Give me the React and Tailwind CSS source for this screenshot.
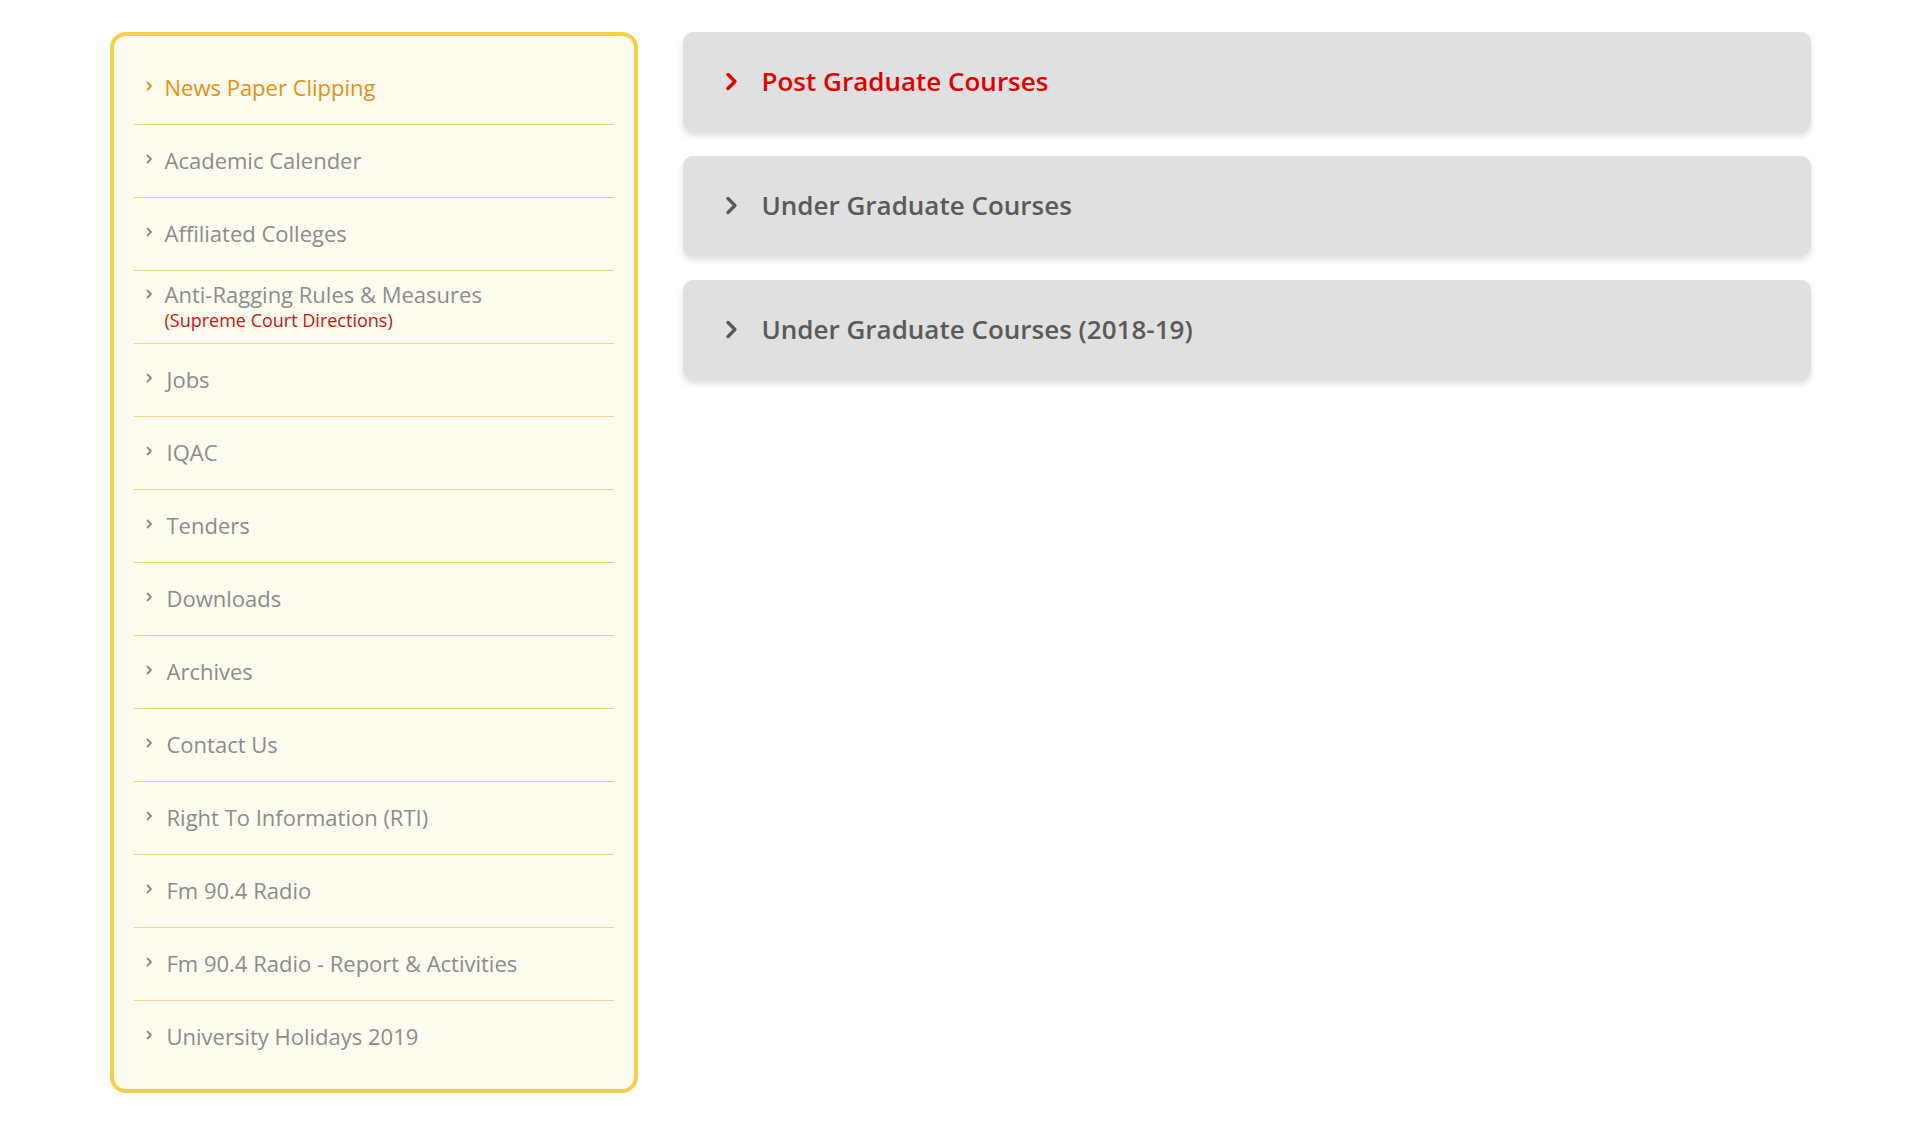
import React from "react";

const items = [
  { label: "News Paper Clipping", active: true },
  { label: "Academic Calender" },
  { label: "Affiliated Colleges" },
  { label: "Anti-Ragging Rules & Measures", sub: "(Supreme Court Directions)" },
  { label: "Jobs", shift: true },
  { label: "IQAC", shift: true },
  { label: "Tenders", shift: true },
  { label: "Downloads", shift: true },
  { label: "Archives", shift: true },
  { label: "Contact Us", shift: true },
  { label: "Right To Information (RTI)", shift: true },
  { label: "Fm 90.4 Radio", shift: true },
  { label: "Fm 90.4 Radio - Report & Activities", shift: true },
  { label: "University Holidays 2019", shift: true },
];

const panels = [
  { label: "Post Graduate Courses", active: true },
  { label: "Under Graduate Courses" },
  { label: "Under Graduate Courses (2018-19)" },
];

function SmallChevron({ color }) {
  return (
    <svg width="7" height="10" viewBox="0 0 7 10" className="shrink-0">
      <polyline points="1.5,1.5 5,5 1.5,8.5" fill="none" stroke={color} strokeWidth="1.8" strokeLinecap="round" strokeLinejoin="round" />
    </svg>
  );
}

function BigChevron({ color }) {
  return (
    <svg width="13" height="19" viewBox="0 0 13 19" className="shrink-0">
      <polyline points="3,2.5 10,9.5 3,16.5" fill="none" stroke={color} strokeWidth="3.4" strokeLinecap="round" strokeLinejoin="round" />
    </svg>
  );
}

export default function App() {
  return (
    <div className="min-h-[1140px] bg-white" style={{ fontFamily: '"Open Sans", "Noto Sans", sans-serif' }}>
      <div className="w-[1701px] mx-auto pt-[32px] flex items-start gap-[45px]">
        <aside className="w-[528px] shrink-0 border-4 border-[#f5cf48] rounded-[16px] bg-[#fffdef] px-5 py-4">
          {items.map((it, i) => (
            <div
              key={i}
              className={`h-[72px] box-content flex items-center ${i < items.length - 1 ? "border-b border-[#efd77c]" : ""}`}
            >
              <div className="flex items-start pl-[12px] -mt-[2px]">
                <div className={`${it.sub ? "mt-[9px]" : "mt-[8px]"}`}>
                  <SmallChevron color={it.active ? "#e8900f" : "#8a8a8a"} />
                </div>
                <div className={`${it.shift ? "ml-[14px]" : "ml-[12px]"} flex flex-col`}>
                  <span className={`text-[22px] leading-[28px] ${it.active ? "text-[#e8900f]" : "text-[#8c8c8c]"}`}>
                    {it.label}
                  </span>
                  {it.sub && (
                    <span className="text-[18px] leading-[24px] text-[#cc1111]">{it.sub}</span>
                  )}
                </div>
              </div>
            </div>
          ))}
        </aside>
        <main className="flex-1 flex flex-col gap-[24px]">
          {panels.map((p, i) => (
            <div
              key={i}
              className="h-[100px] rounded-[10px] bg-[#e0e0e0] shadow-[0_4px_6px_rgba(0,0,0,0.13)] flex items-center pl-[42px] pb-[2px]"
            >
              <BigChevron color={p.active ? "#e10000" : "#5a5a5a"} />
              <span className={`ml-[24px] text-[26px] font-semibold ${p.active ? "text-[#e10000]" : "text-[#5a5a5a]"}`}>
                {p.label}
              </span>
            </div>
          ))}
        </main>
      </div>
    </div>
  );
}
